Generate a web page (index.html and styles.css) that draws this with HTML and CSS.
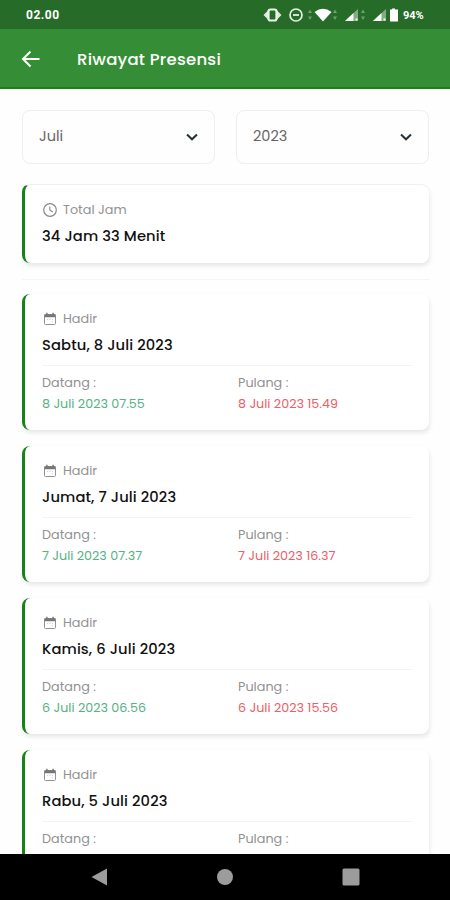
FILE: index.html
```html
<!DOCTYPE html>
<html lang="id">
<head>
    <meta charset="UTF-8">
    <title>Riwayat Presensi</title>
    <link rel="stylesheet" href="styles.css">
</head>
<body>
    <svg class="defs">
        <symbol id="calendar" viewBox="0 0 14 14">
            <path d="M2.500 2.500h9a1 1 0 0 1 1 1v8a1 1 0 0 1-1 1h-9a1 1 0 0 1-1-1v-8a1 1 0 0 1 1-1z" fill="none" stroke="#939393"/>
            <path d="M1.500 2.200h11v3h-11zM3.200.8h1.400v2H3.200zM9.400.8h1.400v2H9.400z" fill="#777"/>
            <path d="M4 7.500h1.200M6.400 7.500h1.200M8.800 7.500H10M8.800 9.800H10" stroke="#d4d4d4"/>
        </symbol>
        <symbol id="chevron" viewBox="0 0 14 10">
            <path d="M2 2.500l5 4.800 5-4.800" fill="none" stroke="#263238" stroke-width="2"/>
        </symbol>
    </svg>

    <div class="statusbar">
        <span class="time">02.00</span>
        <svg class="status-icons" width="136" height="18" viewBox="0 0 136 18">
            <!-- vibrate -->
            <path d="M5 4.500L.5 9 5 13.500zM14 4.500L18.500 9 14 13.500z" fill="#dcebdc"/>
            <rect x="5.500" y="3.500" width="8" height="11" rx="2" fill="#276b29" stroke="#e9f3e9" stroke-width="2.200"/>
            <!-- do not disturb -->
            <circle cx="33" cy="9" r="6" fill="none" stroke="#e4f0e4" stroke-width="1.700"/>
            <path d="M30 9h6" stroke="#e4f0e4" stroke-width="1.800"/>
            <path d="M45 7l2-3.500L49 7zM45 10.500l2 3.500 2-3.500z" fill="#6fa070"/>
            <!-- wifi -->
            <path d="M51.500 6Q60-.5 68.500 6L60 15.500z" fill="#fff"/>
            <path d="M70 7l2-3.500L74 7zM70 10.500l2 3.500 2-3.500z" fill="#6fa070"/>
            <!-- signal -->
            <path d="M82 15L95 3v12z" fill="#80ad81"/>
            <path d="M82 15l8.500-8v8z" fill="#fff"/>
            <path d="M92.500 12.500h2v2h-2z" fill="#fff"/>
            <path d="M98 7l2-3.500 2 3.500zM98 10.500l2 3.500 2-3.500z" fill="#6fa070"/>
            <path d="M110 15l13-12v12z" fill="#80ad81"/>
            <path d="M110 15l8.500-8v8z" fill="#fff"/>
            <path d="M120.500 12.500h2v2h-2z" fill="#fff"/>
            <!-- battery -->
            <path d="M129 2.500h3v1h3v12h-8v-12h2z" fill="#fff"/>
        </svg>
        <span class="battery">94%</span>
    </div>

    <header class="appbar">
        <svg width="20" height="20" viewBox="0 0 20 20">
            <path d="M18.500 10H2.500M9.500 2.500L2 10l7.500 7.500" fill="none" stroke="#fff" stroke-width="2"/>
        </svg>
        <h1>Riwayat Presensi</h1>
    </header>

    <main class="content">
        <div class="filters">
            <div class="select">
                <span>Juli</span>
                <svg width="14" height="10"><use href="#chevron"/></svg>
            </div>
            <div class="select">
                <span>2023</span>
                <svg width="14" height="10"><use href="#chevron"/></svg>
            </div>
        </div>

        <section class="card total">
            <div class="label">
                <svg width="16" height="16" viewBox="0 0 16 16">
                    <circle cx="8" cy="8" r="6.300" fill="none" stroke="#888" stroke-width="1.200"/>
                    <path d="M7.800 4.500V8l3 2" fill="none" stroke="#888" stroke-width="1.100"/>
                </svg>
                <span>Total Jam</span>
            </div>
            <h2>34 Jam 33 Menit</h2>
        </section>

        <div class="divider"></div>

        <div class="list">
            <section class="card">
                <div class="label">
                    <svg width="16" height="14"><use href="#calendar"/></svg>
                    <span>Hadir</span>
                </div>
                <h2>Sabtu, 8 Juli 2023</h2>
                <div class="times">
                    <div><p>Datang :</p><p class="in">8 Juli 2023 07.55</p></div>
                    <div><p>Pulang :</p><p class="out">8 Juli 2023 15.49</p></div>
                </div>
            </section>
            <section class="card">
                <div class="label">
                    <svg width="16" height="14"><use href="#calendar"/></svg>
                    <span>Hadir</span>
                </div>
                <h2>Jumat, 7 Juli 2023</h2>
                <div class="times">
                    <div><p>Datang :</p><p class="in">7 Juli 2023 07.37</p></div>
                    <div><p>Pulang :</p><p class="out">7 Juli 2023 16.37</p></div>
                </div>
            </section>
            <section class="card">
                <div class="label">
                    <svg width="16" height="14"><use href="#calendar"/></svg>
                    <span>Hadir</span>
                </div>
                <h2>Kamis, 6 Juli 2023</h2>
                <div class="times">
                    <div><p>Datang :</p><p class="in">6 Juli 2023 06.56</p></div>
                    <div><p>Pulang :</p><p class="out">6 Juli 2023 15.56</p></div>
                </div>
            </section>
            <section class="card">
                <div class="label">
                    <svg width="16" height="14"><use href="#calendar"/></svg>
                    <span>Hadir</span>
                </div>
                <h2>Rabu, 5 Juli 2023</h2>
                <div class="times">
                    <div><p>Datang :</p></div>
                    <div><p>Pulang :</p></div>
                </div>
            </section>
        </div>
    </main>

    <nav class="navbar">
        <svg width="18" height="18" viewBox="0 0 18 18"><path d="M1.500 9L17 .5v17z" fill="#9c9c9c"/></svg>
        <svg width="18" height="18" viewBox="0 0 18 18"><circle cx="9" cy="9" r="8" fill="#9c9c9c"/></svg>
        <svg width="18" height="18" viewBox="0 0 18 18"><rect x=".5" y=".5" width="17" height="17" rx="1.500" fill="#9c9c9c"/></svg>
    </nav>
</body>
</html>
```

FILE: styles.css
```css
* {
    box-sizing: border-box;
}

body {
    margin: 0;
    height: 900px;
    display: flex;
    flex-direction: column;
    overflow: hidden;
    background: #fefefe;
    font-family: Poppins, Inter, sans-serif;
}

h1, h2, p {
    margin: 0;
}

svg {
    display: block;
    flex: none;
}

.defs {
    display: none;
}

.statusbar {
    flex: none;
    height: 29px;
    display: flex;
    align-items: center;
    padding: 1px 25px 0 26px;
    background: #276b29;
    color: #fff;
    font-family: Roboto, sans-serif;
    font-weight: 700;
}

.time {
    font-size: 12px;
    letter-spacing: 0.5px;
}

.status-icons {
    margin-left: auto;
}

.battery {
    margin-left: 4px;
    font-size: 11px;
    width: 22px;
}

.appbar {
    flex: none;
    height: 60px;
    display: flex;
    align-items: center;
    gap: 36px;
    padding: 2px 0 0 21px;
    background: #358e36;
    border-bottom: 2px solid #168219;
    color: #fff;
}

.appbar h1 {
    font-size: 16.5px;
    font-weight: 500;
    letter-spacing: 0.25px;
}

.content {
    flex: 1;
    min-height: 0;
    overflow: hidden;
    padding: 21px 21px 0 22px;
}

.filters {
    display: flex;
    gap: 21px;
    margin-bottom: 20px;
}

.select {
    flex: 1;
    height: 54px;
    display: flex;
    align-items: center;
    justify-content: space-between;
    padding: 0 15px 1px 16px;
    border: 1px solid #efefef;
    border-radius: 8px;
    color: #666;
    font-size: 14.5px;
}

.card {
    height: 136px;
    padding: 15px 16px 16px 17px;
    border-left: 3px solid #168219;
    border-radius: 8px;
    background: #fff;
    box-shadow: 1px 3px 4px rgba(0, 0, 0, 0.09);
}

.card.total {
    height: 79px;
    border-top: 1px solid #f0f0f0;
}

.label {
    height: 20px;
    display: flex;
    align-items: center;
    gap: 5px;
    color: #929292;
    font-size: 12.8px;
}

.card h2 {
    margin-top: 4px;
    height: 24px;
    line-height: 24px;
    font-size: 14.7px;
    font-weight: 500;
    letter-spacing: 0.12px;
    color: #111;
}

.divider {
    height: 1px;
    margin: 16px 0 14px;
    background: #f5f5f5;
}

.list {
    display: flex;
    flex-direction: column;
    gap: 16px;
}

.times {
    display: grid;
    grid-template-columns: 1fr 175px;
    margin-top: 8px;
    padding-top: 6px;
    border-top: 1px solid #f4f4f4;
    color: #929292;
    font-size: 12.8px;
    line-height: 21px;
}

.times .in {
    color: #55b283;
    font-size: 12.7px;
}

.times .out {
    color: #ea5e68;
    font-size: 12.7px;
}

.navbar {
    flex: none;
    height: 46px;
    display: flex;
    align-items: center;
    justify-content: space-between;
    padding: 0 90px;
    background: #000;
}
```
